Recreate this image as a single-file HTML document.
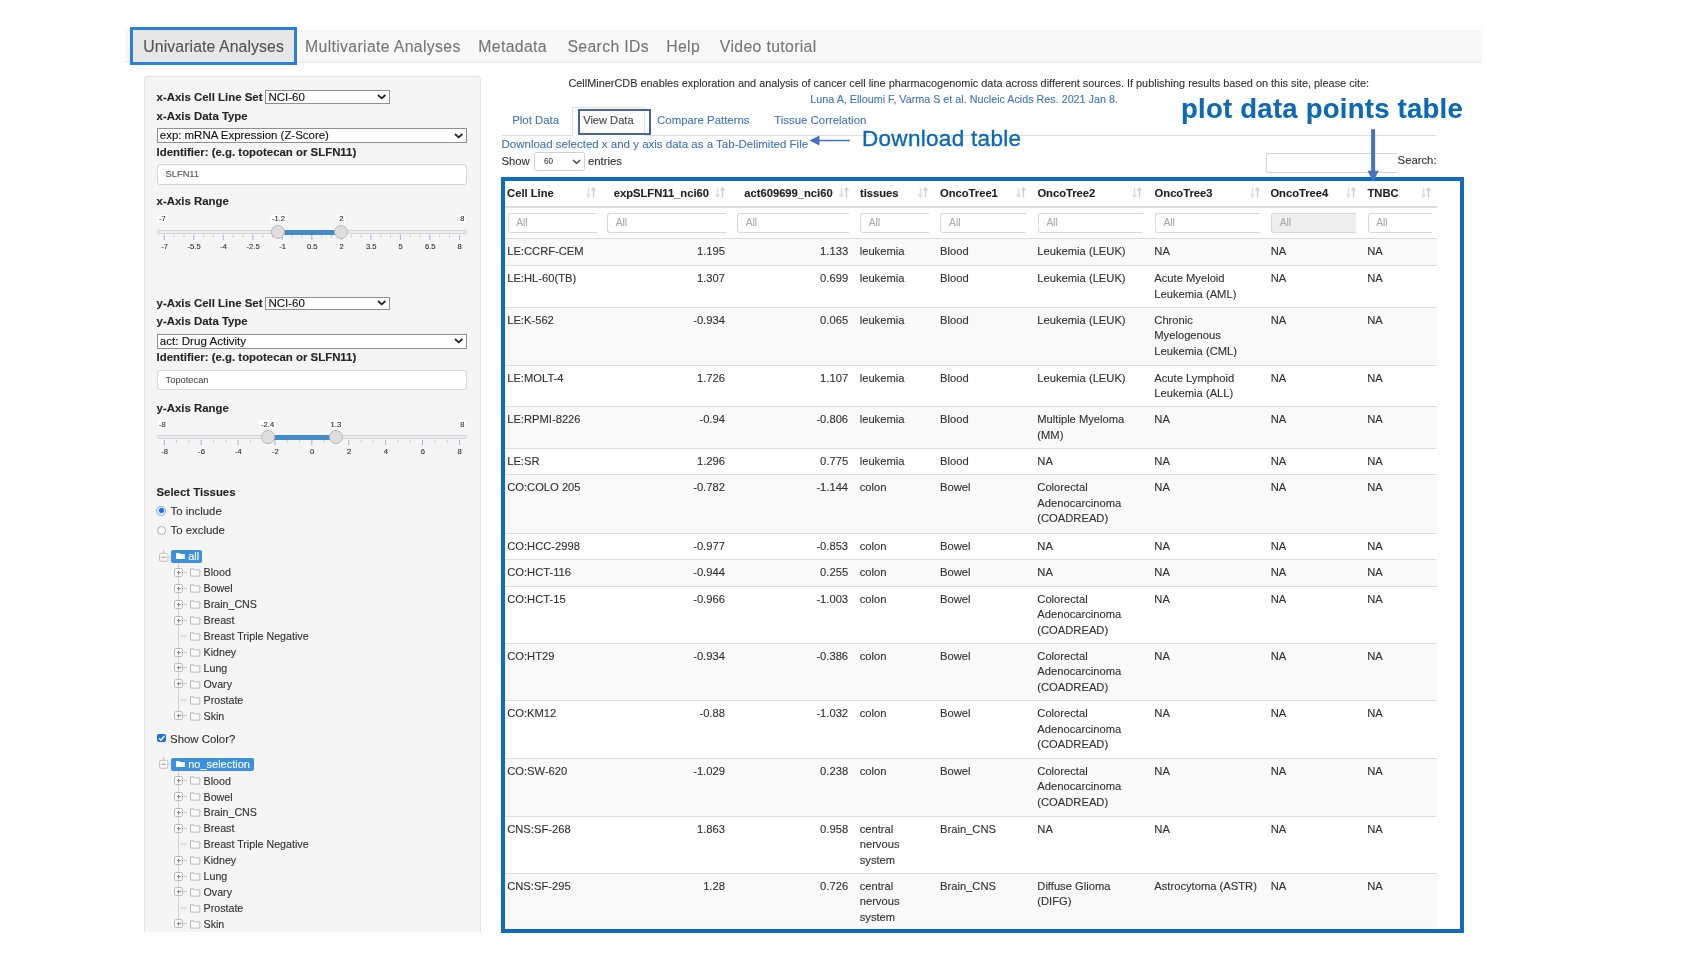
<!DOCTYPE html>
<html><head><meta charset="utf-8"><style>
html,body{margin:0;padding:0;background:#fff;}
body{width:1700px;height:956px;position:relative;overflow:hidden;font-family:"Liberation Sans", sans-serif;}
.t{position:absolute;white-space:nowrap;-webkit-text-stroke:0.12px currentColor;}
.b{position:absolute;}
svg.b{overflow:visible;}
</style></head><body>
<div id="root" style="position:absolute;left:0;top:0;width:1700px;height:956px;will-change:transform;">
<div class="b" style="left:125.00px;top:29.70px;width:1357.00px;height:31.60px;background:#f8f8f8;"></div>
<div class="b" style="left:125.00px;top:61.30px;width:1357.00px;height:2.00px;background:#efefef;"></div>
<div class="b" style="left:129.80px;top:27.40px;width:167.40px;height:37.30px;background:#e7e7e7;border:3px solid #2b7fe3;box-sizing:border-box;"></div>
<div class="t " style="left:143.30px;top:39.17px;font-size:15.8px;line-height:15.8px;color:#555;font-weight:normal;letter-spacing:0.1px;">Univariate Analyses</div>
<div class="t " style="left:305.00px;top:39.17px;font-size:15.8px;line-height:15.8px;color:#777;font-weight:normal;letter-spacing:0.35px;">Multivariate Analyses</div>
<div class="t " style="left:478.30px;top:39.17px;font-size:15.8px;line-height:15.8px;color:#777;font-weight:normal;letter-spacing:0.35px;">Metadata</div>
<div class="t " style="left:567.40px;top:39.17px;font-size:15.8px;line-height:15.8px;color:#777;font-weight:normal;letter-spacing:0.35px;">Search IDs</div>
<div class="t " style="left:666.20px;top:39.17px;font-size:15.8px;line-height:15.8px;color:#777;font-weight:normal;letter-spacing:0.35px;">Help</div>
<div class="t " style="left:719.80px;top:39.17px;font-size:15.8px;line-height:15.8px;color:#777;font-weight:normal;letter-spacing:0.35px;">Video tutorial</div>
<div class="b" style="left:143.50px;top:76.30px;width:337.50px;height:855.70px;background:#f5f5f5;border:1px solid #e3e3e3;border-bottom:none;border-radius:4px 4px 0 0;box-sizing:border-box;"></div>
<div class="t " style="left:156.60px;top:91.59px;font-size:11.42px;line-height:11.42px;color:#262626;font-weight:bold;">x-Axis Cell Line Set</div>
<div class="b" style="left:265.20px;top:90.10px;width:124.60px;height:13.80px;background:#fff;border:1.3px solid #8f8f8f;box-sizing:border-box;"></div>
<div class="t " style="left:268.40px;top:91.62px;font-size:11.5px;line-height:11.5px;color:#111;font-weight:normal;">NCI-60</div>
<svg class="b" style="left:375.70px;top:93.00px;" width="11.4" height="7.4" viewBox="0 0 11.4 7.4"><polyline points="2,2.04 5.7,5.37 9.4,2.04" fill="none" stroke="#222" stroke-width="1.8"/></svg>
<div class="t " style="left:156.60px;top:110.99px;font-size:11.42px;line-height:11.42px;color:#262626;font-weight:bold;">x-Axis Data Type</div>
<div class="b" style="left:156.60px;top:128.20px;width:310.40px;height:14.80px;background:#fff;border:1.3px solid #8f8f8f;box-sizing:border-box;"></div>
<div class="t " style="left:159.80px;top:129.87px;font-size:11.45px;line-height:11.45px;color:#111;font-weight:normal;">exp: mRNA Expression (Z-Score)</div>
<svg class="b" style="left:452.90px;top:131.60px;" width="11.4" height="7.4" viewBox="0 0 11.4 7.4"><polyline points="2,2.04 5.7,5.37 9.4,2.04" fill="none" stroke="#222" stroke-width="1.8"/></svg>
<div class="t " style="left:156.60px;top:146.79px;font-size:11.42px;line-height:11.42px;color:#262626;font-weight:bold;">Identifier: (e.g. topotecan or SLFN11)</div>
<div class="b" style="left:156.60px;top:163.50px;width:310.10px;height:21.00px;background:#fff;border:1px solid #d6d6d6;border-radius:3px;box-sizing:border-box;"></div>
<div class="t " style="left:165.60px;top:169.50px;font-size:9.3px;line-height:9.3px;color:#555;font-weight:normal;">SLFN11</div>
<div class="t " style="left:156.60px;top:196.29px;font-size:11.42px;line-height:11.42px;color:#262626;font-weight:bold;">x-Axis Range</div>
<div class="b" style="left:156.60px;top:229.70px;width:310.10px;height:4.60px;background:#eee;border:1px solid #d4d4d4;border-radius:3px;box-sizing:border-box;"></div>
<div class="b" style="left:278.41px;top:229.60px;width:62.95px;height:5.00px;background:#428bca;"></div>
<svg class="b" style="left:156.00px;top:234.80px;" width="320" height="6" viewBox="0 0 320 6"><line x1="8.30" y1="0" x2="8.30" y2="5" stroke="#a3b3cc" stroke-width="1"/><line x1="18.14" y1="0" x2="18.14" y2="3" stroke="#cfcfcf" stroke-width="1"/><line x1="27.97" y1="0" x2="27.97" y2="3" stroke="#cfcfcf" stroke-width="1"/><line x1="37.81" y1="0" x2="37.81" y2="5" stroke="#a3b3cc" stroke-width="1"/><line x1="47.65" y1="0" x2="47.65" y2="3" stroke="#cfcfcf" stroke-width="1"/><line x1="57.48" y1="0" x2="57.48" y2="3" stroke="#cfcfcf" stroke-width="1"/><line x1="67.32" y1="0" x2="67.32" y2="5" stroke="#a3b3cc" stroke-width="1"/><line x1="77.16" y1="0" x2="77.16" y2="3" stroke="#cfcfcf" stroke-width="1"/><line x1="86.99" y1="0" x2="86.99" y2="3" stroke="#cfcfcf" stroke-width="1"/><line x1="96.83" y1="0" x2="96.83" y2="5" stroke="#a3b3cc" stroke-width="1"/><line x1="106.67" y1="0" x2="106.67" y2="3" stroke="#cfcfcf" stroke-width="1"/><line x1="116.50" y1="0" x2="116.50" y2="3" stroke="#cfcfcf" stroke-width="1"/><line x1="126.34" y1="0" x2="126.34" y2="5" stroke="#a3b3cc" stroke-width="1"/><line x1="136.18" y1="0" x2="136.18" y2="3" stroke="#cfcfcf" stroke-width="1"/><line x1="146.01" y1="0" x2="146.01" y2="3" stroke="#cfcfcf" stroke-width="1"/><line x1="155.85" y1="0" x2="155.85" y2="5" stroke="#a3b3cc" stroke-width="1"/><line x1="165.69" y1="0" x2="165.69" y2="3" stroke="#cfcfcf" stroke-width="1"/><line x1="175.52" y1="0" x2="175.52" y2="3" stroke="#cfcfcf" stroke-width="1"/><line x1="185.36" y1="0" x2="185.36" y2="5" stroke="#a3b3cc" stroke-width="1"/><line x1="195.20" y1="0" x2="195.20" y2="3" stroke="#cfcfcf" stroke-width="1"/><line x1="205.03" y1="0" x2="205.03" y2="3" stroke="#cfcfcf" stroke-width="1"/><line x1="214.87" y1="0" x2="214.87" y2="5" stroke="#a3b3cc" stroke-width="1"/><line x1="224.71" y1="0" x2="224.71" y2="3" stroke="#cfcfcf" stroke-width="1"/><line x1="234.54" y1="0" x2="234.54" y2="3" stroke="#cfcfcf" stroke-width="1"/><line x1="244.38" y1="0" x2="244.38" y2="5" stroke="#a3b3cc" stroke-width="1"/><line x1="254.22" y1="0" x2="254.22" y2="3" stroke="#cfcfcf" stroke-width="1"/><line x1="264.05" y1="0" x2="264.05" y2="3" stroke="#cfcfcf" stroke-width="1"/><line x1="273.89" y1="0" x2="273.89" y2="5" stroke="#a3b3cc" stroke-width="1"/><line x1="283.73" y1="0" x2="283.73" y2="3" stroke="#cfcfcf" stroke-width="1"/><line x1="293.56" y1="0" x2="293.56" y2="3" stroke="#cfcfcf" stroke-width="1"/><line x1="303.40" y1="0" x2="303.40" y2="5" stroke="#a3b3cc" stroke-width="1"/></svg>
<div class="t" style="left:-235.40px;width:800px;text-align:center;top:242.84px;font-size:7.6px;line-height:7.6px;color:#333;font-weight:normal;">-7</div>
<div class="t" style="left:-205.89px;width:800px;text-align:center;top:242.84px;font-size:7.6px;line-height:7.6px;color:#333;font-weight:normal;">-5.5</div>
<div class="t" style="left:-176.38px;width:800px;text-align:center;top:242.84px;font-size:7.6px;line-height:7.6px;color:#333;font-weight:normal;">-4</div>
<div class="t" style="left:-146.87px;width:800px;text-align:center;top:242.84px;font-size:7.6px;line-height:7.6px;color:#333;font-weight:normal;">-2.5</div>
<div class="t" style="left:-117.36px;width:800px;text-align:center;top:242.84px;font-size:7.6px;line-height:7.6px;color:#333;font-weight:normal;">-1</div>
<div class="t" style="left:-87.85px;width:800px;text-align:center;top:242.84px;font-size:7.6px;line-height:7.6px;color:#333;font-weight:normal;">0.5</div>
<div class="t" style="left:-58.34px;width:800px;text-align:center;top:242.84px;font-size:7.6px;line-height:7.6px;color:#333;font-weight:normal;">2</div>
<div class="t" style="left:-28.83px;width:800px;text-align:center;top:242.84px;font-size:7.6px;line-height:7.6px;color:#333;font-weight:normal;">3.5</div>
<div class="t" style="left:0.68px;width:800px;text-align:center;top:242.84px;font-size:7.6px;line-height:7.6px;color:#333;font-weight:normal;">5</div>
<div class="t" style="left:30.19px;width:800px;text-align:center;top:242.84px;font-size:7.6px;line-height:7.6px;color:#333;font-weight:normal;">6.5</div>
<div class="t" style="left:59.70px;width:800px;text-align:center;top:242.84px;font-size:7.6px;line-height:7.6px;color:#333;font-weight:normal;">8</div>
<div class="b" style="left:157.15px;top:214.80px;width:10.30px;height:8.00px;background:#fff;border-radius:2px;"></div>
<div class="t" style="left:-237.70px;width:800px;text-align:center;top:215.34px;font-size:7.6px;line-height:7.6px;color:#333;font-weight:normal;">-7</div>
<div class="b" style="left:458.95px;top:214.80px;width:6.90px;height:8.00px;background:#fff;border-radius:2px;"></div>
<div class="t" style="left:62.40px;width:800px;text-align:center;top:215.34px;font-size:7.6px;line-height:7.6px;color:#333;font-weight:normal;">8</div>
<div class="b" style="left:269.86px;top:214.80px;width:17.10px;height:8.00px;background:#fff;border-radius:2px;"></div>
<div class="t" style="left:-121.59px;width:800px;text-align:center;top:215.34px;font-size:7.6px;line-height:7.6px;color:#333;font-weight:normal;">-1.2</div>
<div class="b" style="left:337.91px;top:214.80px;width:6.90px;height:8.00px;background:#fff;border-radius:2px;"></div>
<div class="t" style="left:-58.64px;width:800px;text-align:center;top:215.34px;font-size:7.6px;line-height:7.6px;color:#333;font-weight:normal;">2</div>
<div class="b" style="left:271.41px;top:225.00px;width:14.00px;height:14.00px;background:#dedede;border:1px solid #b8b8b8;border-radius:50%;box-sizing:border-box;"></div>
<div class="b" style="left:334.36px;top:225.00px;width:14.00px;height:14.00px;background:#dedede;border:1px solid #b8b8b8;border-radius:50%;box-sizing:border-box;"></div>
<div class="t " style="left:156.60px;top:297.99px;font-size:11.42px;line-height:11.42px;color:#262626;font-weight:bold;">y-Axis Cell Line Set</div>
<div class="b" style="left:265.20px;top:296.60px;width:124.60px;height:13.50px;background:#fff;border:1.3px solid #8f8f8f;box-sizing:border-box;"></div>
<div class="t " style="left:268.40px;top:297.83px;font-size:11.5px;line-height:11.5px;color:#111;font-weight:normal;">NCI-60</div>
<svg class="b" style="left:375.70px;top:299.35px;" width="11.4" height="7.4" viewBox="0 0 11.4 7.4"><polyline points="2,2.04 5.7,5.37 9.4,2.04" fill="none" stroke="#222" stroke-width="1.8"/></svg>
<div class="t " style="left:156.60px;top:316.39px;font-size:11.42px;line-height:11.42px;color:#262626;font-weight:bold;">y-Axis Data Type</div>
<div class="b" style="left:156.60px;top:334.00px;width:310.40px;height:14.60px;background:#fff;border:1.3px solid #8f8f8f;box-sizing:border-box;"></div>
<div class="t " style="left:159.80px;top:335.34px;font-size:11.6px;line-height:11.6px;color:#111;font-weight:normal;">act: Drug Activity</div>
<svg class="b" style="left:452.90px;top:337.30px;" width="11.4" height="7.4" viewBox="0 0 11.4 7.4"><polyline points="2,2.04 5.7,5.37 9.4,2.04" fill="none" stroke="#222" stroke-width="1.8"/></svg>
<div class="t " style="left:156.60px;top:351.89px;font-size:11.42px;line-height:11.42px;color:#262626;font-weight:bold;">Identifier: (e.g. topotecan or SLFN11)</div>
<div class="b" style="left:156.60px;top:370.00px;width:310.10px;height:20.40px;background:#fff;border:1px solid #d6d6d6;border-radius:3px;box-sizing:border-box;"></div>
<div class="t " style="left:165.60px;top:375.69px;font-size:9.3px;line-height:9.3px;color:#555;font-weight:normal;">Topotecan</div>
<div class="t " style="left:156.60px;top:402.59px;font-size:11.42px;line-height:11.42px;color:#262626;font-weight:bold;">y-Axis Range</div>
<div class="b" style="left:156.60px;top:434.90px;width:310.10px;height:4.60px;background:#eee;border:1px solid #d4d4d4;border-radius:3px;box-sizing:border-box;"></div>
<div class="b" style="left:267.58px;top:434.80px;width:68.24px;height:5.00px;background:#428bca;"></div>
<svg class="b" style="left:156.00px;top:440.00px;" width="320" height="6" viewBox="0 0 320 6"><line x1="8.30" y1="0" x2="8.30" y2="5" stroke="#a3b3cc" stroke-width="1"/><line x1="20.60" y1="0" x2="20.60" y2="3" stroke="#cfcfcf" stroke-width="1"/><line x1="32.89" y1="0" x2="32.89" y2="3" stroke="#cfcfcf" stroke-width="1"/><line x1="45.19" y1="0" x2="45.19" y2="5" stroke="#a3b3cc" stroke-width="1"/><line x1="57.48" y1="0" x2="57.48" y2="3" stroke="#cfcfcf" stroke-width="1"/><line x1="69.78" y1="0" x2="69.78" y2="3" stroke="#cfcfcf" stroke-width="1"/><line x1="82.07" y1="0" x2="82.07" y2="5" stroke="#a3b3cc" stroke-width="1"/><line x1="94.37" y1="0" x2="94.37" y2="3" stroke="#cfcfcf" stroke-width="1"/><line x1="106.67" y1="0" x2="106.67" y2="3" stroke="#cfcfcf" stroke-width="1"/><line x1="118.96" y1="0" x2="118.96" y2="5" stroke="#a3b3cc" stroke-width="1"/><line x1="131.26" y1="0" x2="131.26" y2="3" stroke="#cfcfcf" stroke-width="1"/><line x1="143.55" y1="0" x2="143.55" y2="3" stroke="#cfcfcf" stroke-width="1"/><line x1="155.85" y1="0" x2="155.85" y2="5" stroke="#a3b3cc" stroke-width="1"/><line x1="168.15" y1="0" x2="168.15" y2="3" stroke="#cfcfcf" stroke-width="1"/><line x1="180.44" y1="0" x2="180.44" y2="3" stroke="#cfcfcf" stroke-width="1"/><line x1="192.74" y1="0" x2="192.74" y2="5" stroke="#a3b3cc" stroke-width="1"/><line x1="205.03" y1="0" x2="205.03" y2="3" stroke="#cfcfcf" stroke-width="1"/><line x1="217.33" y1="0" x2="217.33" y2="3" stroke="#cfcfcf" stroke-width="1"/><line x1="229.62" y1="0" x2="229.62" y2="5" stroke="#a3b3cc" stroke-width="1"/><line x1="241.92" y1="0" x2="241.92" y2="3" stroke="#cfcfcf" stroke-width="1"/><line x1="254.22" y1="0" x2="254.22" y2="3" stroke="#cfcfcf" stroke-width="1"/><line x1="266.51" y1="0" x2="266.51" y2="5" stroke="#a3b3cc" stroke-width="1"/><line x1="278.81" y1="0" x2="278.81" y2="3" stroke="#cfcfcf" stroke-width="1"/><line x1="291.10" y1="0" x2="291.10" y2="3" stroke="#cfcfcf" stroke-width="1"/><line x1="303.40" y1="0" x2="303.40" y2="5" stroke="#a3b3cc" stroke-width="1"/></svg>
<div class="t" style="left:-235.40px;width:800px;text-align:center;top:448.04px;font-size:7.6px;line-height:7.6px;color:#333;font-weight:normal;">-8</div>
<div class="t" style="left:-198.51px;width:800px;text-align:center;top:448.04px;font-size:7.6px;line-height:7.6px;color:#333;font-weight:normal;">-6</div>
<div class="t" style="left:-161.62px;width:800px;text-align:center;top:448.04px;font-size:7.6px;line-height:7.6px;color:#333;font-weight:normal;">-4</div>
<div class="t" style="left:-124.74px;width:800px;text-align:center;top:448.04px;font-size:7.6px;line-height:7.6px;color:#333;font-weight:normal;">-2</div>
<div class="t" style="left:-87.85px;width:800px;text-align:center;top:448.04px;font-size:7.6px;line-height:7.6px;color:#333;font-weight:normal;">0</div>
<div class="t" style="left:-50.96px;width:800px;text-align:center;top:448.04px;font-size:7.6px;line-height:7.6px;color:#333;font-weight:normal;">2</div>
<div class="t" style="left:-14.07px;width:800px;text-align:center;top:448.04px;font-size:7.6px;line-height:7.6px;color:#333;font-weight:normal;">4</div>
<div class="t" style="left:22.81px;width:800px;text-align:center;top:448.04px;font-size:7.6px;line-height:7.6px;color:#333;font-weight:normal;">6</div>
<div class="t" style="left:59.70px;width:800px;text-align:center;top:448.04px;font-size:7.6px;line-height:7.6px;color:#333;font-weight:normal;">8</div>
<div class="b" style="left:157.15px;top:420.00px;width:10.30px;height:8.00px;background:#fff;border-radius:2px;"></div>
<div class="t" style="left:-237.70px;width:800px;text-align:center;top:420.54px;font-size:7.6px;line-height:7.6px;color:#333;font-weight:normal;">-8</div>
<div class="b" style="left:458.95px;top:420.00px;width:6.90px;height:8.00px;background:#fff;border-radius:2px;"></div>
<div class="t" style="left:62.40px;width:800px;text-align:center;top:420.54px;font-size:7.6px;line-height:7.6px;color:#333;font-weight:normal;">8</div>
<div class="b" style="left:259.03px;top:420.00px;width:17.10px;height:8.00px;background:#fff;border-radius:2px;"></div>
<div class="t" style="left:-132.42px;width:800px;text-align:center;top:420.54px;font-size:7.6px;line-height:7.6px;color:#333;font-weight:normal;">-2.4</div>
<div class="b" style="left:328.98px;top:420.00px;width:13.70px;height:8.00px;background:#fff;border-radius:2px;"></div>
<div class="t" style="left:-64.17px;width:800px;text-align:center;top:420.54px;font-size:7.6px;line-height:7.6px;color:#333;font-weight:normal;">1.3</div>
<div class="b" style="left:260.58px;top:430.20px;width:14.00px;height:14.00px;background:#dedede;border:1px solid #b8b8b8;border-radius:50%;box-sizing:border-box;"></div>
<div class="b" style="left:328.83px;top:430.20px;width:14.00px;height:14.00px;background:#dedede;border:1px solid #b8b8b8;border-radius:50%;box-sizing:border-box;"></div>
<div class="t " style="left:156.50px;top:486.79px;font-size:11.42px;line-height:11.42px;color:#262626;font-weight:bold;">Select Tissues</div>
<div class="b" style="left:156.30px;top:506.00px;width:9.60px;height:9.60px;background:#dbe8fb;border:1.3px solid #86aef0;border-radius:50%;box-sizing:border-box;"></div>
<div class="b" style="left:158.60px;top:508.30px;width:5.00px;height:5.00px;background:#1a6ee8;border-radius:50%;"></div>
<div class="t " style="left:170.50px;top:506.11px;font-size:11.4px;line-height:11.4px;color:#333;font-weight:normal;">To include</div>
<div class="b" style="left:156.50px;top:525.60px;width:9.20px;height:9.20px;background:#fff;border:1px solid #aaa;border-radius:50%;box-sizing:border-box;"></div>
<div class="t " style="left:170.50px;top:525.21px;font-size:11.4px;line-height:11.4px;color:#333;font-weight:normal;">To exclude</div>
<svg class="b" style="left:157.00px;top:548.50px;" width="16" height="16" viewBox="0 0 16 16"><line x1="6.6" y1="1" x2="6.6" y2="4.3" stroke="#bbb" stroke-width="0.9"/><rect x="2.6" y="4.3" width="8.3" height="8" rx="1.3" fill="none" stroke="#bbb" stroke-width="0.9"/><line x1="4.6" y1="8.3" x2="8.9" y2="8.3" stroke="#999" stroke-width="0.9"/><line x1="10.9" y1="8.3" x2="14" y2="8.3" stroke="#ccc" stroke-width="0.9"/></svg>
<div class="b" style="left:171.10px;top:550.00px;width:30.60px;height:12.90px;background:#3d8fe0;border-radius:2px;"></div>
<svg class="b" style="left:175.80px;top:552.90px;" width="9" height="6" viewBox="0 0 9 6"><path d="M0,0 h3.2 l0.9,1 h4.7 v5 h-8.8 z" fill="#fff"/></svg>
<div class="t " style="left:188.20px;top:551.15px;font-size:11.0px;line-height:11.0px;color:#fff;font-weight:normal;">all</div>
<div class="b" style="left:178.10px;top:563.00px;width:0.80px;height:151.77px;background:#d2d2d2;"></div>
<svg class="b" style="left:174.00px;top:568.00px;" width="14" height="9" viewBox="0 0 14 9"><rect x="0.5" y="0.5" width="8" height="8" rx="1.2" fill="#f5f5f5" stroke="#bdbdbd" stroke-width="1"/><path d="M2.5,4.5 H6.5 M4.5,2.5 V6.5" stroke="#8a8a8a" stroke-width="1" shape-rendering="crispEdges"/><path d="M9,4.5 H12.5" stroke="#cccccc" stroke-width="1" shape-rendering="crispEdges"/></svg>
<div class="b" style="left:178.10px;top:576.40px;width:0.80px;height:0.01px;"></div>
<svg class="b" style="left:190.00px;top:568.20px;" width="11" height="9" viewBox="0 0 11 9"><path d="M0.5,0.8 h3.4 l1.1,1.1 h4.8 v6.2 h-9.3 z" fill="#fafafa" stroke="#b0b0b0" stroke-width="0.85"/></svg>
<div class="t " style="left:203.50px;top:567.40px;font-size:10.7px;line-height:10.7px;color:#333;font-weight:normal;">Blood</div>
<svg class="b" style="left:174.00px;top:584.00px;" width="14" height="9" viewBox="0 0 14 9"><rect x="0.5" y="0.5" width="8" height="8" rx="1.2" fill="#f5f5f5" stroke="#bdbdbd" stroke-width="1"/><path d="M2.5,4.5 H6.5 M4.5,2.5 V6.5" stroke="#8a8a8a" stroke-width="1" shape-rendering="crispEdges"/><path d="M9,4.5 H12.5" stroke="#cccccc" stroke-width="1" shape-rendering="crispEdges"/></svg>
<div class="b" style="left:178.10px;top:592.33px;width:0.80px;height:0.01px;"></div>
<svg class="b" style="left:190.00px;top:584.13px;" width="11" height="9" viewBox="0 0 11 9"><path d="M0.5,0.8 h3.4 l1.1,1.1 h4.8 v6.2 h-9.3 z" fill="#fafafa" stroke="#b0b0b0" stroke-width="0.85"/></svg>
<div class="t " style="left:203.50px;top:583.33px;font-size:10.7px;line-height:10.7px;color:#333;font-weight:normal;">Bowel</div>
<svg class="b" style="left:174.00px;top:600.00px;" width="14" height="9" viewBox="0 0 14 9"><rect x="0.5" y="0.5" width="8" height="8" rx="1.2" fill="#f5f5f5" stroke="#bdbdbd" stroke-width="1"/><path d="M2.5,4.5 H6.5 M4.5,2.5 V6.5" stroke="#8a8a8a" stroke-width="1" shape-rendering="crispEdges"/><path d="M9,4.5 H12.5" stroke="#cccccc" stroke-width="1" shape-rendering="crispEdges"/></svg>
<div class="b" style="left:178.10px;top:608.26px;width:0.80px;height:0.01px;"></div>
<svg class="b" style="left:190.00px;top:600.06px;" width="11" height="9" viewBox="0 0 11 9"><path d="M0.5,0.8 h3.4 l1.1,1.1 h4.8 v6.2 h-9.3 z" fill="#fafafa" stroke="#b0b0b0" stroke-width="0.85"/></svg>
<div class="t " style="left:203.50px;top:599.26px;font-size:10.7px;line-height:10.7px;color:#333;font-weight:normal;">Brain_CNS</div>
<svg class="b" style="left:174.00px;top:616.00px;" width="14" height="9" viewBox="0 0 14 9"><rect x="0.5" y="0.5" width="8" height="8" rx="1.2" fill="#f5f5f5" stroke="#bdbdbd" stroke-width="1"/><path d="M2.5,4.5 H6.5 M4.5,2.5 V6.5" stroke="#8a8a8a" stroke-width="1" shape-rendering="crispEdges"/><path d="M9,4.5 H12.5" stroke="#cccccc" stroke-width="1" shape-rendering="crispEdges"/></svg>
<div class="b" style="left:178.10px;top:624.19px;width:0.80px;height:0.01px;"></div>
<svg class="b" style="left:190.00px;top:615.99px;" width="11" height="9" viewBox="0 0 11 9"><path d="M0.5,0.8 h3.4 l1.1,1.1 h4.8 v6.2 h-9.3 z" fill="#fafafa" stroke="#b0b0b0" stroke-width="0.85"/></svg>
<div class="t " style="left:203.50px;top:615.19px;font-size:10.7px;line-height:10.7px;color:#333;font-weight:normal;">Breast</div>
<svg class="b" style="left:173.50px;top:631.12px;" width="16" height="10" viewBox="0 0 16 10"><line x1="5.4" y1="5" x2="12.5" y2="5" stroke="#c8c8c8" stroke-width="0.9"/></svg>
<svg class="b" style="left:190.00px;top:631.92px;" width="11" height="9" viewBox="0 0 11 9"><path d="M0.5,0.8 h3.4 l1.1,1.1 h4.8 v6.2 h-9.3 z" fill="#fafafa" stroke="#b0b0b0" stroke-width="0.85"/></svg>
<div class="t " style="left:203.50px;top:631.12px;font-size:10.7px;line-height:10.7px;color:#333;font-weight:normal;">Breast Triple Negative</div>
<svg class="b" style="left:174.00px;top:648.00px;" width="14" height="9" viewBox="0 0 14 9"><rect x="0.5" y="0.5" width="8" height="8" rx="1.2" fill="#f5f5f5" stroke="#bdbdbd" stroke-width="1"/><path d="M2.5,4.5 H6.5 M4.5,2.5 V6.5" stroke="#8a8a8a" stroke-width="1" shape-rendering="crispEdges"/><path d="M9,4.5 H12.5" stroke="#cccccc" stroke-width="1" shape-rendering="crispEdges"/></svg>
<div class="b" style="left:178.10px;top:656.05px;width:0.80px;height:0.01px;"></div>
<svg class="b" style="left:190.00px;top:647.85px;" width="11" height="9" viewBox="0 0 11 9"><path d="M0.5,0.8 h3.4 l1.1,1.1 h4.8 v6.2 h-9.3 z" fill="#fafafa" stroke="#b0b0b0" stroke-width="0.85"/></svg>
<div class="t " style="left:203.50px;top:647.05px;font-size:10.7px;line-height:10.7px;color:#333;font-weight:normal;">Kidney</div>
<svg class="b" style="left:174.00px;top:663.00px;" width="14" height="9" viewBox="0 0 14 9"><rect x="0.5" y="0.5" width="8" height="8" rx="1.2" fill="#f5f5f5" stroke="#bdbdbd" stroke-width="1"/><path d="M2.5,4.5 H6.5 M4.5,2.5 V6.5" stroke="#8a8a8a" stroke-width="1" shape-rendering="crispEdges"/><path d="M9,4.5 H12.5" stroke="#cccccc" stroke-width="1" shape-rendering="crispEdges"/></svg>
<div class="b" style="left:178.10px;top:671.98px;width:0.80px;height:0.01px;"></div>
<svg class="b" style="left:190.00px;top:663.78px;" width="11" height="9" viewBox="0 0 11 9"><path d="M0.5,0.8 h3.4 l1.1,1.1 h4.8 v6.2 h-9.3 z" fill="#fafafa" stroke="#b0b0b0" stroke-width="0.85"/></svg>
<div class="t " style="left:203.50px;top:662.99px;font-size:10.7px;line-height:10.7px;color:#333;font-weight:normal;">Lung</div>
<svg class="b" style="left:174.00px;top:679.00px;" width="14" height="9" viewBox="0 0 14 9"><rect x="0.5" y="0.5" width="8" height="8" rx="1.2" fill="#f5f5f5" stroke="#bdbdbd" stroke-width="1"/><path d="M2.5,4.5 H6.5 M4.5,2.5 V6.5" stroke="#8a8a8a" stroke-width="1" shape-rendering="crispEdges"/><path d="M9,4.5 H12.5" stroke="#cccccc" stroke-width="1" shape-rendering="crispEdges"/></svg>
<div class="b" style="left:178.10px;top:687.91px;width:0.80px;height:0.01px;"></div>
<svg class="b" style="left:190.00px;top:679.71px;" width="11" height="9" viewBox="0 0 11 9"><path d="M0.5,0.8 h3.4 l1.1,1.1 h4.8 v6.2 h-9.3 z" fill="#fafafa" stroke="#b0b0b0" stroke-width="0.85"/></svg>
<div class="t " style="left:203.50px;top:678.91px;font-size:10.7px;line-height:10.7px;color:#333;font-weight:normal;">Ovary</div>
<svg class="b" style="left:173.50px;top:694.84px;" width="16" height="10" viewBox="0 0 16 10"><line x1="5.4" y1="5" x2="12.5" y2="5" stroke="#c8c8c8" stroke-width="0.9"/></svg>
<svg class="b" style="left:190.00px;top:695.64px;" width="11" height="9" viewBox="0 0 11 9"><path d="M0.5,0.8 h3.4 l1.1,1.1 h4.8 v6.2 h-9.3 z" fill="#fafafa" stroke="#b0b0b0" stroke-width="0.85"/></svg>
<div class="t " style="left:203.50px;top:694.84px;font-size:10.7px;line-height:10.7px;color:#333;font-weight:normal;">Prostate</div>
<svg class="b" style="left:174.00px;top:711.00px;" width="14" height="9" viewBox="0 0 14 9"><rect x="0.5" y="0.5" width="8" height="8" rx="1.2" fill="#f5f5f5" stroke="#bdbdbd" stroke-width="1"/><path d="M2.5,4.5 H6.5 M4.5,2.5 V6.5" stroke="#8a8a8a" stroke-width="1" shape-rendering="crispEdges"/><path d="M9,4.5 H12.5" stroke="#cccccc" stroke-width="1" shape-rendering="crispEdges"/></svg>
<svg class="b" style="left:190.00px;top:711.57px;" width="11" height="9" viewBox="0 0 11 9"><path d="M0.5,0.8 h3.4 l1.1,1.1 h4.8 v6.2 h-9.3 z" fill="#fafafa" stroke="#b0b0b0" stroke-width="0.85"/></svg>
<div class="t " style="left:203.50px;top:710.77px;font-size:10.7px;line-height:10.7px;color:#333;font-weight:normal;">Skin</div>
<div class="b" style="left:156.50px;top:733.60px;width:9.30px;height:8.60px;background:#1a6ee8;border-radius:2px;"></div>
<svg class="b" style="left:156.50px;top:733.70px;" width="9.2" height="8.3" viewBox="0 0 9.2 8.3"><polyline points="2,4.3 3.9,6.2 7.4,2" fill="none" stroke="#fff" stroke-width="1.5"/></svg>
<div class="t " style="left:170.10px;top:733.91px;font-size:11.4px;line-height:11.4px;color:#333;font-weight:normal;">Show Color?</div>
<svg class="b" style="left:157.00px;top:756.20px;" width="16" height="16" viewBox="0 0 16 16"><line x1="6.6" y1="1" x2="6.6" y2="4.3" stroke="#bbb" stroke-width="0.9"/><rect x="2.6" y="4.3" width="8.3" height="8" rx="1.3" fill="none" stroke="#bbb" stroke-width="0.9"/><line x1="4.6" y1="8.3" x2="8.9" y2="8.3" stroke="#999" stroke-width="0.9"/><line x1="10.9" y1="8.3" x2="14" y2="8.3" stroke="#ccc" stroke-width="0.9"/></svg>
<div class="b" style="left:171.10px;top:757.70px;width:82.90px;height:12.90px;background:#3d8fe0;border-radius:2px;"></div>
<svg class="b" style="left:175.80px;top:760.60px;" width="9" height="6" viewBox="0 0 9 6"><path d="M0,0 h3.2 l0.9,1 h4.7 v5 h-8.8 z" fill="#fff"/></svg>
<div class="t " style="left:188.20px;top:758.85px;font-size:11.0px;line-height:11.0px;color:#fff;font-weight:normal;">no_selection</div>
<div class="b" style="left:178.10px;top:770.70px;width:0.80px;height:152.00px;background:#d2d2d2;"></div>
<svg class="b" style="left:174.00px;top:776.00px;" width="14" height="9" viewBox="0 0 14 9"><rect x="0.5" y="0.5" width="8" height="8" rx="1.2" fill="#f5f5f5" stroke="#bdbdbd" stroke-width="1"/><path d="M2.5,4.5 H6.5 M4.5,2.5 V6.5" stroke="#8a8a8a" stroke-width="1" shape-rendering="crispEdges"/><path d="M9,4.5 H12.5" stroke="#cccccc" stroke-width="1" shape-rendering="crispEdges"/></svg>
<div class="b" style="left:178.10px;top:784.60px;width:0.80px;height:0.01px;"></div>
<svg class="b" style="left:190.00px;top:776.40px;" width="11" height="9" viewBox="0 0 11 9"><path d="M0.5,0.8 h3.4 l1.1,1.1 h4.8 v6.2 h-9.3 z" fill="#fafafa" stroke="#b0b0b0" stroke-width="0.85"/></svg>
<div class="t " style="left:203.50px;top:775.61px;font-size:10.7px;line-height:10.7px;color:#333;font-weight:normal;">Blood</div>
<svg class="b" style="left:174.00px;top:792.00px;" width="14" height="9" viewBox="0 0 14 9"><rect x="0.5" y="0.5" width="8" height="8" rx="1.2" fill="#f5f5f5" stroke="#bdbdbd" stroke-width="1"/><path d="M2.5,4.5 H6.5 M4.5,2.5 V6.5" stroke="#8a8a8a" stroke-width="1" shape-rendering="crispEdges"/><path d="M9,4.5 H12.5" stroke="#cccccc" stroke-width="1" shape-rendering="crispEdges"/></svg>
<div class="b" style="left:178.10px;top:800.50px;width:0.80px;height:0.01px;"></div>
<svg class="b" style="left:190.00px;top:792.30px;" width="11" height="9" viewBox="0 0 11 9"><path d="M0.5,0.8 h3.4 l1.1,1.1 h4.8 v6.2 h-9.3 z" fill="#fafafa" stroke="#b0b0b0" stroke-width="0.85"/></svg>
<div class="t " style="left:203.50px;top:791.50px;font-size:10.7px;line-height:10.7px;color:#333;font-weight:normal;">Bowel</div>
<svg class="b" style="left:174.00px;top:808.00px;" width="14" height="9" viewBox="0 0 14 9"><rect x="0.5" y="0.5" width="8" height="8" rx="1.2" fill="#f5f5f5" stroke="#bdbdbd" stroke-width="1"/><path d="M2.5,4.5 H6.5 M4.5,2.5 V6.5" stroke="#8a8a8a" stroke-width="1" shape-rendering="crispEdges"/><path d="M9,4.5 H12.5" stroke="#cccccc" stroke-width="1" shape-rendering="crispEdges"/></svg>
<div class="b" style="left:178.10px;top:816.40px;width:0.80px;height:0.01px;"></div>
<svg class="b" style="left:190.00px;top:808.20px;" width="11" height="9" viewBox="0 0 11 9"><path d="M0.5,0.8 h3.4 l1.1,1.1 h4.8 v6.2 h-9.3 z" fill="#fafafa" stroke="#b0b0b0" stroke-width="0.85"/></svg>
<div class="t " style="left:203.50px;top:807.40px;font-size:10.7px;line-height:10.7px;color:#333;font-weight:normal;">Brain_CNS</div>
<svg class="b" style="left:174.00px;top:824.00px;" width="14" height="9" viewBox="0 0 14 9"><rect x="0.5" y="0.5" width="8" height="8" rx="1.2" fill="#f5f5f5" stroke="#bdbdbd" stroke-width="1"/><path d="M2.5,4.5 H6.5 M4.5,2.5 V6.5" stroke="#8a8a8a" stroke-width="1" shape-rendering="crispEdges"/><path d="M9,4.5 H12.5" stroke="#cccccc" stroke-width="1" shape-rendering="crispEdges"/></svg>
<div class="b" style="left:178.10px;top:832.30px;width:0.80px;height:0.01px;"></div>
<svg class="b" style="left:190.00px;top:824.10px;" width="11" height="9" viewBox="0 0 11 9"><path d="M0.5,0.8 h3.4 l1.1,1.1 h4.8 v6.2 h-9.3 z" fill="#fafafa" stroke="#b0b0b0" stroke-width="0.85"/></svg>
<div class="t " style="left:203.50px;top:823.31px;font-size:10.7px;line-height:10.7px;color:#333;font-weight:normal;">Breast</div>
<svg class="b" style="left:173.50px;top:839.20px;" width="16" height="10" viewBox="0 0 16 10"><line x1="5.4" y1="5" x2="12.5" y2="5" stroke="#c8c8c8" stroke-width="0.9"/></svg>
<svg class="b" style="left:190.00px;top:840.00px;" width="11" height="9" viewBox="0 0 11 9"><path d="M0.5,0.8 h3.4 l1.1,1.1 h4.8 v6.2 h-9.3 z" fill="#fafafa" stroke="#b0b0b0" stroke-width="0.85"/></svg>
<div class="t " style="left:203.50px;top:839.21px;font-size:10.7px;line-height:10.7px;color:#333;font-weight:normal;">Breast Triple Negative</div>
<svg class="b" style="left:174.00px;top:856.00px;" width="14" height="9" viewBox="0 0 14 9"><rect x="0.5" y="0.5" width="8" height="8" rx="1.2" fill="#f5f5f5" stroke="#bdbdbd" stroke-width="1"/><path d="M2.5,4.5 H6.5 M4.5,2.5 V6.5" stroke="#8a8a8a" stroke-width="1" shape-rendering="crispEdges"/><path d="M9,4.5 H12.5" stroke="#cccccc" stroke-width="1" shape-rendering="crispEdges"/></svg>
<div class="b" style="left:178.10px;top:864.10px;width:0.80px;height:0.01px;"></div>
<svg class="b" style="left:190.00px;top:855.90px;" width="11" height="9" viewBox="0 0 11 9"><path d="M0.5,0.8 h3.4 l1.1,1.1 h4.8 v6.2 h-9.3 z" fill="#fafafa" stroke="#b0b0b0" stroke-width="0.85"/></svg>
<div class="t " style="left:203.50px;top:855.11px;font-size:10.7px;line-height:10.7px;color:#333;font-weight:normal;">Kidney</div>
<svg class="b" style="left:174.00px;top:872.00px;" width="14" height="9" viewBox="0 0 14 9"><rect x="0.5" y="0.5" width="8" height="8" rx="1.2" fill="#f5f5f5" stroke="#bdbdbd" stroke-width="1"/><path d="M2.5,4.5 H6.5 M4.5,2.5 V6.5" stroke="#8a8a8a" stroke-width="1" shape-rendering="crispEdges"/><path d="M9,4.5 H12.5" stroke="#cccccc" stroke-width="1" shape-rendering="crispEdges"/></svg>
<div class="b" style="left:178.10px;top:880.00px;width:0.80px;height:0.01px;"></div>
<svg class="b" style="left:190.00px;top:871.80px;" width="11" height="9" viewBox="0 0 11 9"><path d="M0.5,0.8 h3.4 l1.1,1.1 h4.8 v6.2 h-9.3 z" fill="#fafafa" stroke="#b0b0b0" stroke-width="0.85"/></svg>
<div class="t " style="left:203.50px;top:871.00px;font-size:10.7px;line-height:10.7px;color:#333;font-weight:normal;">Lung</div>
<svg class="b" style="left:174.00px;top:887.00px;" width="14" height="9" viewBox="0 0 14 9"><rect x="0.5" y="0.5" width="8" height="8" rx="1.2" fill="#f5f5f5" stroke="#bdbdbd" stroke-width="1"/><path d="M2.5,4.5 H6.5 M4.5,2.5 V6.5" stroke="#8a8a8a" stroke-width="1" shape-rendering="crispEdges"/><path d="M9,4.5 H12.5" stroke="#cccccc" stroke-width="1" shape-rendering="crispEdges"/></svg>
<div class="b" style="left:178.10px;top:895.90px;width:0.80px;height:0.01px;"></div>
<svg class="b" style="left:190.00px;top:887.70px;" width="11" height="9" viewBox="0 0 11 9"><path d="M0.5,0.8 h3.4 l1.1,1.1 h4.8 v6.2 h-9.3 z" fill="#fafafa" stroke="#b0b0b0" stroke-width="0.85"/></svg>
<div class="t " style="left:203.50px;top:886.90px;font-size:10.7px;line-height:10.7px;color:#333;font-weight:normal;">Ovary</div>
<svg class="b" style="left:173.50px;top:902.80px;" width="16" height="10" viewBox="0 0 16 10"><line x1="5.4" y1="5" x2="12.5" y2="5" stroke="#c8c8c8" stroke-width="0.9"/></svg>
<svg class="b" style="left:190.00px;top:903.60px;" width="11" height="9" viewBox="0 0 11 9"><path d="M0.5,0.8 h3.4 l1.1,1.1 h4.8 v6.2 h-9.3 z" fill="#fafafa" stroke="#b0b0b0" stroke-width="0.85"/></svg>
<div class="t " style="left:203.50px;top:902.81px;font-size:10.7px;line-height:10.7px;color:#333;font-weight:normal;">Prostate</div>
<svg class="b" style="left:174.00px;top:919.00px;" width="14" height="9" viewBox="0 0 14 9"><rect x="0.5" y="0.5" width="8" height="8" rx="1.2" fill="#f5f5f5" stroke="#bdbdbd" stroke-width="1"/><path d="M2.5,4.5 H6.5 M4.5,2.5 V6.5" stroke="#8a8a8a" stroke-width="1" shape-rendering="crispEdges"/><path d="M9,4.5 H12.5" stroke="#cccccc" stroke-width="1" shape-rendering="crispEdges"/></svg>
<svg class="b" style="left:190.00px;top:919.50px;" width="11" height="9" viewBox="0 0 11 9"><path d="M0.5,0.8 h3.4 l1.1,1.1 h4.8 v6.2 h-9.3 z" fill="#fafafa" stroke="#b0b0b0" stroke-width="0.85"/></svg>
<div class="t " style="left:203.50px;top:918.71px;font-size:10.7px;line-height:10.7px;color:#333;font-weight:normal;">Skin</div>
<div class="t" style="left:568.80px;width:800px;text-align:center;top:78.14px;font-size:10.9px;line-height:10.9px;color:#333;font-weight:normal;width:1000px;left:468.8px;">CellMinerCDB enables exploration and analysis of cancer cell line pharmacogenomic data across different sources. If publishing results based on this site, please cite:</div>
<div class="t" style="left:564.10px;width:800px;text-align:center;top:93.86px;font-size:10.75px;line-height:10.75px;color:#4277b6;font-weight:normal;">Luna A, Elloumi F, Varma S et al. Nucleic Acids Res. 2021 Jan 8.</div>
<div class="b" style="left:501.50px;top:134.60px;width:935.50px;height:1.00px;background:#ddd;"></div>
<div class="b" style="left:572.40px;top:106.60px;width:73.10px;height:29.00px;background:#fff;border:1px solid #e2e2e2;border-bottom-color:#fff;border-radius:1px 1px 0 0;box-sizing:border-box;"></div>
<div class="b" style="left:578.30px;top:108.60px;width:72.50px;height:26.30px;border:2px solid #4363ab;box-sizing:border-box;"></div>
<div class="t " style="left:512.20px;top:115.21px;font-size:11.4px;line-height:11.4px;color:#4277b6;font-weight:normal;">Plot Data</div>
<div class="t " style="left:583.20px;top:115.47px;font-size:11.1px;line-height:11.1px;color:#4a4a4a;font-weight:normal;-webkit-text-stroke:0.15px #4a4a4a;">View Data</div>
<div class="t " style="left:657.10px;top:115.21px;font-size:11.4px;line-height:11.4px;color:#4277b6;font-weight:normal;">Compare Patterns</div>
<div class="t " style="left:774.30px;top:115.21px;font-size:11.4px;line-height:11.4px;color:#4277b6;font-weight:normal;">Tissue Correlation</div>
<div class="t " style="left:501.50px;top:138.62px;font-size:11.5px;line-height:11.5px;color:#4277b6;font-weight:normal;">Download selected x and y axis data as a Tab-Delimited File</div>
<div class="t " style="left:501.50px;top:155.90px;font-size:11.3px;line-height:11.3px;color:#333;font-weight:normal;">Show</div>
<div class="b" style="left:533.60px;top:152.30px;width:51.00px;height:19.20px;background:#fff;border:1px solid #d0d0d0;border-radius:2.5px;box-sizing:border-box;"></div>
<div class="t " style="left:544.00px;top:158.43px;font-size:8.2px;line-height:8.2px;color:#444;font-weight:normal;">60</div>
<svg class="b" style="left:570.70px;top:158.40px;" width="11.2" height="7.2" viewBox="0 0 11.2 7.2"><polyline points="2,1.98 5.6,5.22 9.2,1.98" fill="none" stroke="#444" stroke-width="1.5"/></svg>
<div class="t " style="left:588.00px;top:155.90px;font-size:11.3px;line-height:11.3px;color:#333;font-weight:normal;">entries</div>
<div class="b" style="left:1266.40px;top:152.60px;width:130.60px;height:20.00px;background:#fff;border:1px solid #d4d4d4;border-right:none;border-radius:3px 0 0 3px;box-sizing:border-box;"></div>
<div class="t " style="left:1397.60px;top:155.00px;font-size:11.3px;line-height:11.3px;color:#333;font-weight:normal;">Search:</div>
<div class="b" style="left:505.00px;top:206.00px;width:932.00px;height:2.00px;background:#ddd;"></div>
<div class="b" style="left:505.00px;top:238.00px;width:932.00px;height:1.00px;background:#ddd;"></div>
<div class="t " style="left:507.10px;top:187.78px;font-size:11.2px;line-height:11.2px;color:#222;font-weight:bold;">Cell Line</div>
<svg class="b" style="left:586.00px;top:187.20px;" width="10" height="11" viewBox="0 0 10 11"><g fill="none" stroke-width="1.4"><g stroke="#dcdcdc"><line x1="2.5" y1="1" x2="2.5" y2="9.5"/><polyline points="0.5,7.4 2.5,9.8 4.5,7.4"/></g><g stroke="#cfcfcf"><line x1="7.5" y1="1.2" x2="7.5" y2="10.5"/><polyline points="5.5,3.4 7.5,1 9.5,3.4"/></g></g></svg>
<div class="b" style="left:507.50px;top:213.30px;width:89.00px;height:20.00px;background:#fff;border:1px solid #d9d9d9;border-right:none;border-radius:3px 0 0 3px;box-sizing:border-box;"></div>
<div class="t " style="left:516.30px;top:218.33px;font-size:10.2px;line-height:10.2px;color:#aaa;font-weight:normal;">All</div>
<div class="t " style="left:613.80px;top:187.78px;font-size:11.2px;line-height:11.2px;color:#222;font-weight:bold;">expSLFN11_nci60</div>
<svg class="b" style="left:715.40px;top:187.20px;" width="10" height="11" viewBox="0 0 10 11"><g fill="none" stroke-width="1.4"><g stroke="#dcdcdc"><line x1="2.5" y1="1" x2="2.5" y2="9.5"/><polyline points="0.5,7.4 2.5,9.8 4.5,7.4"/></g><g stroke="#cfcfcf"><line x1="7.5" y1="1.2" x2="7.5" y2="10.5"/><polyline points="5.5,3.4 7.5,1 9.5,3.4"/></g></g></svg>
<div class="b" style="left:607.00px;top:213.30px;width:118.90px;height:20.00px;background:#fff;border:1px solid #d9d9d9;border-right:none;border-radius:3px 0 0 3px;box-sizing:border-box;"></div>
<div class="t " style="left:615.80px;top:218.33px;font-size:10.2px;line-height:10.2px;color:#aaa;font-weight:normal;">All</div>
<div class="t " style="left:744.30px;top:187.78px;font-size:11.2px;line-height:11.2px;color:#222;font-weight:bold;">act609699_nci60</div>
<svg class="b" style="left:838.60px;top:187.20px;" width="10" height="11" viewBox="0 0 10 11"><g fill="none" stroke-width="1.4"><g stroke="#dcdcdc"><line x1="2.5" y1="1" x2="2.5" y2="9.5"/><polyline points="0.5,7.4 2.5,9.8 4.5,7.4"/></g><g stroke="#cfcfcf"><line x1="7.5" y1="1.2" x2="7.5" y2="10.5"/><polyline points="5.5,3.4 7.5,1 9.5,3.4"/></g></g></svg>
<div class="b" style="left:736.90px;top:213.30px;width:112.20px;height:20.00px;background:#fff;border:1px solid #d9d9d9;border-right:none;border-radius:3px 0 0 3px;box-sizing:border-box;"></div>
<div class="t " style="left:745.70px;top:218.33px;font-size:10.2px;line-height:10.2px;color:#aaa;font-weight:normal;">All</div>
<div class="t " style="left:860.00px;top:187.78px;font-size:11.2px;line-height:11.2px;color:#222;font-weight:bold;">tissues</div>
<svg class="b" style="left:918.30px;top:187.20px;" width="10" height="11" viewBox="0 0 10 11"><g fill="none" stroke-width="1.4"><g stroke="#dcdcdc"><line x1="2.5" y1="1" x2="2.5" y2="9.5"/><polyline points="0.5,7.4 2.5,9.8 4.5,7.4"/></g><g stroke="#cfcfcf"><line x1="7.5" y1="1.2" x2="7.5" y2="10.5"/><polyline points="5.5,3.4 7.5,1 9.5,3.4"/></g></g></svg>
<div class="b" style="left:860.00px;top:213.30px;width:68.80px;height:20.00px;background:#fff;border:1px solid #d9d9d9;border-right:none;border-radius:3px 0 0 3px;box-sizing:border-box;"></div>
<div class="t " style="left:868.80px;top:218.33px;font-size:10.2px;line-height:10.2px;color:#aaa;font-weight:normal;">All</div>
<div class="t " style="left:940.00px;top:187.78px;font-size:11.2px;line-height:11.2px;color:#222;font-weight:bold;">OncoTree1</div>
<svg class="b" style="left:1015.80px;top:187.20px;" width="10" height="11" viewBox="0 0 10 11"><g fill="none" stroke-width="1.4"><g stroke="#dcdcdc"><line x1="2.5" y1="1" x2="2.5" y2="9.5"/><polyline points="0.5,7.4 2.5,9.8 4.5,7.4"/></g><g stroke="#cfcfcf"><line x1="7.5" y1="1.2" x2="7.5" y2="10.5"/><polyline points="5.5,3.4 7.5,1 9.5,3.4"/></g></g></svg>
<div class="b" style="left:940.30px;top:213.30px;width:86.00px;height:20.00px;background:#fff;border:1px solid #d9d9d9;border-right:none;border-radius:3px 0 0 3px;box-sizing:border-box;"></div>
<div class="t " style="left:949.10px;top:218.33px;font-size:10.2px;line-height:10.2px;color:#aaa;font-weight:normal;">All</div>
<div class="t " style="left:1037.40px;top:187.78px;font-size:11.2px;line-height:11.2px;color:#222;font-weight:bold;">OncoTree2</div>
<svg class="b" style="left:1132.40px;top:187.20px;" width="10" height="11" viewBox="0 0 10 11"><g fill="none" stroke-width="1.4"><g stroke="#dcdcdc"><line x1="2.5" y1="1" x2="2.5" y2="9.5"/><polyline points="0.5,7.4 2.5,9.8 4.5,7.4"/></g><g stroke="#cfcfcf"><line x1="7.5" y1="1.2" x2="7.5" y2="10.5"/><polyline points="5.5,3.4 7.5,1 9.5,3.4"/></g></g></svg>
<div class="b" style="left:1037.60px;top:213.30px;width:105.30px;height:20.00px;background:#fff;border:1px solid #d9d9d9;border-right:none;border-radius:3px 0 0 3px;box-sizing:border-box;"></div>
<div class="t " style="left:1046.40px;top:218.33px;font-size:10.2px;line-height:10.2px;color:#aaa;font-weight:normal;">All</div>
<div class="t " style="left:1154.60px;top:187.78px;font-size:11.2px;line-height:11.2px;color:#222;font-weight:bold;">OncoTree3</div>
<svg class="b" style="left:1249.50px;top:187.20px;" width="10" height="11" viewBox="0 0 10 11"><g fill="none" stroke-width="1.4"><g stroke="#dcdcdc"><line x1="2.5" y1="1" x2="2.5" y2="9.5"/><polyline points="0.5,7.4 2.5,9.8 4.5,7.4"/></g><g stroke="#cfcfcf"><line x1="7.5" y1="1.2" x2="7.5" y2="10.5"/><polyline points="5.5,3.4 7.5,1 9.5,3.4"/></g></g></svg>
<div class="b" style="left:1154.60px;top:213.30px;width:105.40px;height:20.00px;background:#fff;border:1px solid #d9d9d9;border-right:none;border-radius:3px 0 0 3px;box-sizing:border-box;"></div>
<div class="t " style="left:1163.40px;top:218.33px;font-size:10.2px;line-height:10.2px;color:#aaa;font-weight:normal;">All</div>
<div class="t " style="left:1270.40px;top:187.78px;font-size:11.2px;line-height:11.2px;color:#222;font-weight:bold;">OncoTree4</div>
<svg class="b" style="left:1345.90px;top:187.20px;" width="10" height="11" viewBox="0 0 10 11"><g fill="none" stroke-width="1.4"><g stroke="#dcdcdc"><line x1="2.5" y1="1" x2="2.5" y2="9.5"/><polyline points="0.5,7.4 2.5,9.8 4.5,7.4"/></g><g stroke="#cfcfcf"><line x1="7.5" y1="1.2" x2="7.5" y2="10.5"/><polyline points="5.5,3.4 7.5,1 9.5,3.4"/></g></g></svg>
<div class="b" style="left:1271.00px;top:213.30px;width:85.40px;height:20.00px;background:#eee;border:1px solid #d9d9d9;border-right:none;border-radius:3px 0 0 3px;box-sizing:border-box;"></div>
<div class="t " style="left:1279.80px;top:218.33px;font-size:10.2px;line-height:10.2px;color:#aaa;font-weight:normal;">All</div>
<div class="t " style="left:1367.50px;top:187.78px;font-size:11.2px;line-height:11.2px;color:#222;font-weight:bold;">TNBC</div>
<svg class="b" style="left:1421.10px;top:187.20px;" width="10" height="11" viewBox="0 0 10 11"><g fill="none" stroke-width="1.4"><g stroke="#dcdcdc"><line x1="2.5" y1="1" x2="2.5" y2="9.5"/><polyline points="0.5,7.4 2.5,9.8 4.5,7.4"/></g><g stroke="#cfcfcf"><line x1="7.5" y1="1.2" x2="7.5" y2="10.5"/><polyline points="5.5,3.4 7.5,1 9.5,3.4"/></g></g></svg>
<div class="b" style="left:1367.50px;top:213.30px;width:64.10px;height:20.00px;background:#fff;border:1px solid #d9d9d9;border-right:none;border-radius:3px 0 0 3px;box-sizing:border-box;"></div>
<div class="t " style="left:1376.30px;top:218.33px;font-size:10.2px;line-height:10.2px;color:#aaa;font-weight:normal;">All</div>
<div class="b" style="left:505.00px;top:238.50px;width:932.00px;height:26.90px;background:#f9f9f9;"></div>
<div class="t " style="left:507.20px;top:246.28px;font-size:11.2px;line-height:11.2px;color:#333;font-weight:normal;">LE:CCRF-CEM</div>
<div class="t" style="right:975.10px;top:246.28px;font-size:11.2px;line-height:11.2px;color:#333;font-weight:normal;text-align:right;">1.195</div>
<div class="t" style="right:851.90px;top:246.28px;font-size:11.2px;line-height:11.2px;color:#333;font-weight:normal;text-align:right;">1.133</div>
<div class="t " style="left:859.70px;top:246.28px;font-size:11.2px;line-height:11.2px;color:#333;font-weight:normal;">leukemia</div>
<div class="t " style="left:940.00px;top:246.28px;font-size:11.2px;line-height:11.2px;color:#333;font-weight:normal;">Blood</div>
<div class="t " style="left:1037.30px;top:246.28px;font-size:11.2px;line-height:11.2px;color:#333;font-weight:normal;">Leukemia (LEUK)</div>
<div class="t " style="left:1154.30px;top:246.28px;font-size:11.2px;line-height:11.2px;color:#333;font-weight:normal;">NA</div>
<div class="t " style="left:1270.70px;top:246.28px;font-size:11.2px;line-height:11.2px;color:#333;font-weight:normal;">NA</div>
<div class="t " style="left:1367.20px;top:246.28px;font-size:11.2px;line-height:11.2px;color:#333;font-weight:normal;">NA</div>
<div class="b" style="left:505.00px;top:265.40px;width:932.00px;height:41.70px;background:#fff;"></div>
<div class="b" style="left:505.00px;top:264.90px;width:932.00px;height:1.00px;background:#ddd;"></div>
<div class="t " style="left:507.20px;top:273.18px;font-size:11.2px;line-height:11.2px;color:#333;font-weight:normal;">LE:HL-60(TB)</div>
<div class="t" style="right:975.10px;top:273.18px;font-size:11.2px;line-height:11.2px;color:#333;font-weight:normal;text-align:right;">1.307</div>
<div class="t" style="right:851.90px;top:273.18px;font-size:11.2px;line-height:11.2px;color:#333;font-weight:normal;text-align:right;">0.699</div>
<div class="t " style="left:859.70px;top:273.18px;font-size:11.2px;line-height:11.2px;color:#333;font-weight:normal;">leukemia</div>
<div class="t " style="left:940.00px;top:273.18px;font-size:11.2px;line-height:11.2px;color:#333;font-weight:normal;">Blood</div>
<div class="t " style="left:1037.30px;top:273.18px;font-size:11.2px;line-height:11.2px;color:#333;font-weight:normal;">Leukemia (LEUK)</div>
<div class="t " style="left:1154.30px;top:273.18px;font-size:11.2px;line-height:11.2px;color:#333;font-weight:normal;">Acute Myeloid</div>
<div class="t " style="left:1154.30px;top:288.58px;font-size:11.2px;line-height:11.2px;color:#333;font-weight:normal;">Leukemia (AML)</div>
<div class="t " style="left:1270.70px;top:273.18px;font-size:11.2px;line-height:11.2px;color:#333;font-weight:normal;">NA</div>
<div class="t " style="left:1367.20px;top:273.18px;font-size:11.2px;line-height:11.2px;color:#333;font-weight:normal;">NA</div>
<div class="b" style="left:505.00px;top:307.10px;width:932.00px;height:58.00px;background:#f9f9f9;"></div>
<div class="b" style="left:505.00px;top:306.60px;width:932.00px;height:1.00px;background:#ddd;"></div>
<div class="t " style="left:507.20px;top:314.88px;font-size:11.2px;line-height:11.2px;color:#333;font-weight:normal;">LE:K-562</div>
<div class="t" style="right:975.10px;top:314.88px;font-size:11.2px;line-height:11.2px;color:#333;font-weight:normal;text-align:right;">-0.934</div>
<div class="t" style="right:851.90px;top:314.88px;font-size:11.2px;line-height:11.2px;color:#333;font-weight:normal;text-align:right;">0.065</div>
<div class="t " style="left:859.70px;top:314.88px;font-size:11.2px;line-height:11.2px;color:#333;font-weight:normal;">leukemia</div>
<div class="t " style="left:940.00px;top:314.88px;font-size:11.2px;line-height:11.2px;color:#333;font-weight:normal;">Blood</div>
<div class="t " style="left:1037.30px;top:314.88px;font-size:11.2px;line-height:11.2px;color:#333;font-weight:normal;">Leukemia (LEUK)</div>
<div class="t " style="left:1154.30px;top:314.88px;font-size:11.2px;line-height:11.2px;color:#333;font-weight:normal;">Chronic</div>
<div class="t " style="left:1154.30px;top:330.28px;font-size:11.2px;line-height:11.2px;color:#333;font-weight:normal;">Myelogenous</div>
<div class="t " style="left:1154.30px;top:345.68px;font-size:11.2px;line-height:11.2px;color:#333;font-weight:normal;">Leukemia (CML)</div>
<div class="t " style="left:1270.70px;top:314.88px;font-size:11.2px;line-height:11.2px;color:#333;font-weight:normal;">NA</div>
<div class="t " style="left:1367.20px;top:314.88px;font-size:11.2px;line-height:11.2px;color:#333;font-weight:normal;">NA</div>
<div class="b" style="left:505.00px;top:365.10px;width:932.00px;height:41.30px;background:#fff;"></div>
<div class="b" style="left:505.00px;top:364.60px;width:932.00px;height:1.00px;background:#ddd;"></div>
<div class="t " style="left:507.20px;top:372.88px;font-size:11.2px;line-height:11.2px;color:#333;font-weight:normal;">LE:MOLT-4</div>
<div class="t" style="right:975.10px;top:372.88px;font-size:11.2px;line-height:11.2px;color:#333;font-weight:normal;text-align:right;">1.726</div>
<div class="t" style="right:851.90px;top:372.88px;font-size:11.2px;line-height:11.2px;color:#333;font-weight:normal;text-align:right;">1.107</div>
<div class="t " style="left:859.70px;top:372.88px;font-size:11.2px;line-height:11.2px;color:#333;font-weight:normal;">leukemia</div>
<div class="t " style="left:940.00px;top:372.88px;font-size:11.2px;line-height:11.2px;color:#333;font-weight:normal;">Blood</div>
<div class="t " style="left:1037.30px;top:372.88px;font-size:11.2px;line-height:11.2px;color:#333;font-weight:normal;">Leukemia (LEUK)</div>
<div class="t " style="left:1154.30px;top:372.88px;font-size:11.2px;line-height:11.2px;color:#333;font-weight:normal;">Acute Lymphoid</div>
<div class="t " style="left:1154.30px;top:388.28px;font-size:11.2px;line-height:11.2px;color:#333;font-weight:normal;">Leukemia (ALL)</div>
<div class="t " style="left:1270.70px;top:372.88px;font-size:11.2px;line-height:11.2px;color:#333;font-weight:normal;">NA</div>
<div class="t " style="left:1367.20px;top:372.88px;font-size:11.2px;line-height:11.2px;color:#333;font-weight:normal;">NA</div>
<div class="b" style="left:505.00px;top:406.40px;width:932.00px;height:42.20px;background:#f9f9f9;"></div>
<div class="b" style="left:505.00px;top:405.90px;width:932.00px;height:1.00px;background:#ddd;"></div>
<div class="t " style="left:507.20px;top:414.18px;font-size:11.2px;line-height:11.2px;color:#333;font-weight:normal;">LE:RPMI-8226</div>
<div class="t" style="right:975.10px;top:414.18px;font-size:11.2px;line-height:11.2px;color:#333;font-weight:normal;text-align:right;">-0.94</div>
<div class="t" style="right:851.90px;top:414.18px;font-size:11.2px;line-height:11.2px;color:#333;font-weight:normal;text-align:right;">-0.806</div>
<div class="t " style="left:859.70px;top:414.18px;font-size:11.2px;line-height:11.2px;color:#333;font-weight:normal;">leukemia</div>
<div class="t " style="left:940.00px;top:414.18px;font-size:11.2px;line-height:11.2px;color:#333;font-weight:normal;">Blood</div>
<div class="t " style="left:1037.30px;top:414.18px;font-size:11.2px;line-height:11.2px;color:#333;font-weight:normal;">Multiple Myeloma</div>
<div class="t " style="left:1037.30px;top:429.58px;font-size:11.2px;line-height:11.2px;color:#333;font-weight:normal;">(MM)</div>
<div class="t " style="left:1154.30px;top:414.18px;font-size:11.2px;line-height:11.2px;color:#333;font-weight:normal;">NA</div>
<div class="t " style="left:1270.70px;top:414.18px;font-size:11.2px;line-height:11.2px;color:#333;font-weight:normal;">NA</div>
<div class="t " style="left:1367.20px;top:414.18px;font-size:11.2px;line-height:11.2px;color:#333;font-weight:normal;">NA</div>
<div class="b" style="left:505.00px;top:448.60px;width:932.00px;height:26.10px;background:#fff;"></div>
<div class="b" style="left:505.00px;top:448.10px;width:932.00px;height:1.00px;background:#ddd;"></div>
<div class="t " style="left:507.20px;top:456.38px;font-size:11.2px;line-height:11.2px;color:#333;font-weight:normal;">LE:SR</div>
<div class="t" style="right:975.10px;top:456.38px;font-size:11.2px;line-height:11.2px;color:#333;font-weight:normal;text-align:right;">1.296</div>
<div class="t" style="right:851.90px;top:456.38px;font-size:11.2px;line-height:11.2px;color:#333;font-weight:normal;text-align:right;">0.775</div>
<div class="t " style="left:859.70px;top:456.38px;font-size:11.2px;line-height:11.2px;color:#333;font-weight:normal;">leukemia</div>
<div class="t " style="left:940.00px;top:456.38px;font-size:11.2px;line-height:11.2px;color:#333;font-weight:normal;">Blood</div>
<div class="t " style="left:1037.30px;top:456.38px;font-size:11.2px;line-height:11.2px;color:#333;font-weight:normal;">NA</div>
<div class="t " style="left:1154.30px;top:456.38px;font-size:11.2px;line-height:11.2px;color:#333;font-weight:normal;">NA</div>
<div class="t " style="left:1270.70px;top:456.38px;font-size:11.2px;line-height:11.2px;color:#333;font-weight:normal;">NA</div>
<div class="t " style="left:1367.20px;top:456.38px;font-size:11.2px;line-height:11.2px;color:#333;font-weight:normal;">NA</div>
<div class="b" style="left:505.00px;top:474.70px;width:932.00px;height:58.70px;background:#f9f9f9;"></div>
<div class="b" style="left:505.00px;top:474.20px;width:932.00px;height:1.00px;background:#ddd;"></div>
<div class="t " style="left:507.20px;top:482.48px;font-size:11.2px;line-height:11.2px;color:#333;font-weight:normal;">CO:COLO 205</div>
<div class="t" style="right:975.10px;top:482.48px;font-size:11.2px;line-height:11.2px;color:#333;font-weight:normal;text-align:right;">-0.782</div>
<div class="t" style="right:851.90px;top:482.48px;font-size:11.2px;line-height:11.2px;color:#333;font-weight:normal;text-align:right;">-1.144</div>
<div class="t " style="left:859.70px;top:482.48px;font-size:11.2px;line-height:11.2px;color:#333;font-weight:normal;">colon</div>
<div class="t " style="left:940.00px;top:482.48px;font-size:11.2px;line-height:11.2px;color:#333;font-weight:normal;">Bowel</div>
<div class="t " style="left:1037.30px;top:482.48px;font-size:11.2px;line-height:11.2px;color:#333;font-weight:normal;">Colorectal</div>
<div class="t " style="left:1037.30px;top:497.88px;font-size:11.2px;line-height:11.2px;color:#333;font-weight:normal;">Adenocarcinoma</div>
<div class="t " style="left:1037.30px;top:513.28px;font-size:11.2px;line-height:11.2px;color:#333;font-weight:normal;">(COADREAD)</div>
<div class="t " style="left:1154.30px;top:482.48px;font-size:11.2px;line-height:11.2px;color:#333;font-weight:normal;">NA</div>
<div class="t " style="left:1270.70px;top:482.48px;font-size:11.2px;line-height:11.2px;color:#333;font-weight:normal;">NA</div>
<div class="t " style="left:1367.20px;top:482.48px;font-size:11.2px;line-height:11.2px;color:#333;font-weight:normal;">NA</div>
<div class="b" style="left:505.00px;top:533.40px;width:932.00px;height:26.00px;background:#fff;"></div>
<div class="b" style="left:505.00px;top:532.90px;width:932.00px;height:1.00px;background:#ddd;"></div>
<div class="t " style="left:507.20px;top:541.18px;font-size:11.2px;line-height:11.2px;color:#333;font-weight:normal;">CO:HCC-2998</div>
<div class="t" style="right:975.10px;top:541.18px;font-size:11.2px;line-height:11.2px;color:#333;font-weight:normal;text-align:right;">-0.977</div>
<div class="t" style="right:851.90px;top:541.18px;font-size:11.2px;line-height:11.2px;color:#333;font-weight:normal;text-align:right;">-0.853</div>
<div class="t " style="left:859.70px;top:541.18px;font-size:11.2px;line-height:11.2px;color:#333;font-weight:normal;">colon</div>
<div class="t " style="left:940.00px;top:541.18px;font-size:11.2px;line-height:11.2px;color:#333;font-weight:normal;">Bowel</div>
<div class="t " style="left:1037.30px;top:541.18px;font-size:11.2px;line-height:11.2px;color:#333;font-weight:normal;">NA</div>
<div class="t " style="left:1154.30px;top:541.18px;font-size:11.2px;line-height:11.2px;color:#333;font-weight:normal;">NA</div>
<div class="t " style="left:1270.70px;top:541.18px;font-size:11.2px;line-height:11.2px;color:#333;font-weight:normal;">NA</div>
<div class="t " style="left:1367.20px;top:541.18px;font-size:11.2px;line-height:11.2px;color:#333;font-weight:normal;">NA</div>
<div class="b" style="left:505.00px;top:559.40px;width:932.00px;height:26.70px;background:#f9f9f9;"></div>
<div class="b" style="left:505.00px;top:558.90px;width:932.00px;height:1.00px;background:#ddd;"></div>
<div class="t " style="left:507.20px;top:567.18px;font-size:11.2px;line-height:11.2px;color:#333;font-weight:normal;">CO:HCT-116</div>
<div class="t" style="right:975.10px;top:567.18px;font-size:11.2px;line-height:11.2px;color:#333;font-weight:normal;text-align:right;">-0.944</div>
<div class="t" style="right:851.90px;top:567.18px;font-size:11.2px;line-height:11.2px;color:#333;font-weight:normal;text-align:right;">0.255</div>
<div class="t " style="left:859.70px;top:567.18px;font-size:11.2px;line-height:11.2px;color:#333;font-weight:normal;">colon</div>
<div class="t " style="left:940.00px;top:567.18px;font-size:11.2px;line-height:11.2px;color:#333;font-weight:normal;">Bowel</div>
<div class="t " style="left:1037.30px;top:567.18px;font-size:11.2px;line-height:11.2px;color:#333;font-weight:normal;">NA</div>
<div class="t " style="left:1154.30px;top:567.18px;font-size:11.2px;line-height:11.2px;color:#333;font-weight:normal;">NA</div>
<div class="t " style="left:1270.70px;top:567.18px;font-size:11.2px;line-height:11.2px;color:#333;font-weight:normal;">NA</div>
<div class="t " style="left:1367.20px;top:567.18px;font-size:11.2px;line-height:11.2px;color:#333;font-weight:normal;">NA</div>
<div class="b" style="left:505.00px;top:586.10px;width:932.00px;height:57.20px;background:#fff;"></div>
<div class="b" style="left:505.00px;top:585.60px;width:932.00px;height:1.00px;background:#ddd;"></div>
<div class="t " style="left:507.20px;top:593.88px;font-size:11.2px;line-height:11.2px;color:#333;font-weight:normal;">CO:HCT-15</div>
<div class="t" style="right:975.10px;top:593.88px;font-size:11.2px;line-height:11.2px;color:#333;font-weight:normal;text-align:right;">-0.966</div>
<div class="t" style="right:851.90px;top:593.88px;font-size:11.2px;line-height:11.2px;color:#333;font-weight:normal;text-align:right;">-1.003</div>
<div class="t " style="left:859.70px;top:593.88px;font-size:11.2px;line-height:11.2px;color:#333;font-weight:normal;">colon</div>
<div class="t " style="left:940.00px;top:593.88px;font-size:11.2px;line-height:11.2px;color:#333;font-weight:normal;">Bowel</div>
<div class="t " style="left:1037.30px;top:593.88px;font-size:11.2px;line-height:11.2px;color:#333;font-weight:normal;">Colorectal</div>
<div class="t " style="left:1037.30px;top:609.28px;font-size:11.2px;line-height:11.2px;color:#333;font-weight:normal;">Adenocarcinoma</div>
<div class="t " style="left:1037.30px;top:624.68px;font-size:11.2px;line-height:11.2px;color:#333;font-weight:normal;">(COADREAD)</div>
<div class="t " style="left:1154.30px;top:593.88px;font-size:11.2px;line-height:11.2px;color:#333;font-weight:normal;">NA</div>
<div class="t " style="left:1270.70px;top:593.88px;font-size:11.2px;line-height:11.2px;color:#333;font-weight:normal;">NA</div>
<div class="t " style="left:1367.20px;top:593.88px;font-size:11.2px;line-height:11.2px;color:#333;font-weight:normal;">NA</div>
<div class="b" style="left:505.00px;top:643.30px;width:932.00px;height:57.10px;background:#f9f9f9;"></div>
<div class="b" style="left:505.00px;top:642.80px;width:932.00px;height:1.00px;background:#ddd;"></div>
<div class="t " style="left:507.20px;top:651.08px;font-size:11.2px;line-height:11.2px;color:#333;font-weight:normal;">CO:HT29</div>
<div class="t" style="right:975.10px;top:651.08px;font-size:11.2px;line-height:11.2px;color:#333;font-weight:normal;text-align:right;">-0.934</div>
<div class="t" style="right:851.90px;top:651.08px;font-size:11.2px;line-height:11.2px;color:#333;font-weight:normal;text-align:right;">-0.386</div>
<div class="t " style="left:859.70px;top:651.08px;font-size:11.2px;line-height:11.2px;color:#333;font-weight:normal;">colon</div>
<div class="t " style="left:940.00px;top:651.08px;font-size:11.2px;line-height:11.2px;color:#333;font-weight:normal;">Bowel</div>
<div class="t " style="left:1037.30px;top:651.08px;font-size:11.2px;line-height:11.2px;color:#333;font-weight:normal;">Colorectal</div>
<div class="t " style="left:1037.30px;top:666.48px;font-size:11.2px;line-height:11.2px;color:#333;font-weight:normal;">Adenocarcinoma</div>
<div class="t " style="left:1037.30px;top:681.88px;font-size:11.2px;line-height:11.2px;color:#333;font-weight:normal;">(COADREAD)</div>
<div class="t " style="left:1154.30px;top:651.08px;font-size:11.2px;line-height:11.2px;color:#333;font-weight:normal;">NA</div>
<div class="t " style="left:1270.70px;top:651.08px;font-size:11.2px;line-height:11.2px;color:#333;font-weight:normal;">NA</div>
<div class="t " style="left:1367.20px;top:651.08px;font-size:11.2px;line-height:11.2px;color:#333;font-weight:normal;">NA</div>
<div class="b" style="left:505.00px;top:700.40px;width:932.00px;height:57.90px;background:#fff;"></div>
<div class="b" style="left:505.00px;top:699.90px;width:932.00px;height:1.00px;background:#ddd;"></div>
<div class="t " style="left:507.20px;top:708.18px;font-size:11.2px;line-height:11.2px;color:#333;font-weight:normal;">CO:KM12</div>
<div class="t" style="right:975.10px;top:708.18px;font-size:11.2px;line-height:11.2px;color:#333;font-weight:normal;text-align:right;">-0.88</div>
<div class="t" style="right:851.90px;top:708.18px;font-size:11.2px;line-height:11.2px;color:#333;font-weight:normal;text-align:right;">-1.032</div>
<div class="t " style="left:859.70px;top:708.18px;font-size:11.2px;line-height:11.2px;color:#333;font-weight:normal;">colon</div>
<div class="t " style="left:940.00px;top:708.18px;font-size:11.2px;line-height:11.2px;color:#333;font-weight:normal;">Bowel</div>
<div class="t " style="left:1037.30px;top:708.18px;font-size:11.2px;line-height:11.2px;color:#333;font-weight:normal;">Colorectal</div>
<div class="t " style="left:1037.30px;top:723.58px;font-size:11.2px;line-height:11.2px;color:#333;font-weight:normal;">Adenocarcinoma</div>
<div class="t " style="left:1037.30px;top:738.98px;font-size:11.2px;line-height:11.2px;color:#333;font-weight:normal;">(COADREAD)</div>
<div class="t " style="left:1154.30px;top:708.18px;font-size:11.2px;line-height:11.2px;color:#333;font-weight:normal;">NA</div>
<div class="t " style="left:1270.70px;top:708.18px;font-size:11.2px;line-height:11.2px;color:#333;font-weight:normal;">NA</div>
<div class="t " style="left:1367.20px;top:708.18px;font-size:11.2px;line-height:11.2px;color:#333;font-weight:normal;">NA</div>
<div class="b" style="left:505.00px;top:758.30px;width:932.00px;height:58.00px;background:#f9f9f9;"></div>
<div class="b" style="left:505.00px;top:757.80px;width:932.00px;height:1.00px;background:#ddd;"></div>
<div class="t " style="left:507.20px;top:766.08px;font-size:11.2px;line-height:11.2px;color:#333;font-weight:normal;">CO:SW-620</div>
<div class="t" style="right:975.10px;top:766.08px;font-size:11.2px;line-height:11.2px;color:#333;font-weight:normal;text-align:right;">-1.029</div>
<div class="t" style="right:851.90px;top:766.08px;font-size:11.2px;line-height:11.2px;color:#333;font-weight:normal;text-align:right;">0.238</div>
<div class="t " style="left:859.70px;top:766.08px;font-size:11.2px;line-height:11.2px;color:#333;font-weight:normal;">colon</div>
<div class="t " style="left:940.00px;top:766.08px;font-size:11.2px;line-height:11.2px;color:#333;font-weight:normal;">Bowel</div>
<div class="t " style="left:1037.30px;top:766.08px;font-size:11.2px;line-height:11.2px;color:#333;font-weight:normal;">Colorectal</div>
<div class="t " style="left:1037.30px;top:781.48px;font-size:11.2px;line-height:11.2px;color:#333;font-weight:normal;">Adenocarcinoma</div>
<div class="t " style="left:1037.30px;top:796.88px;font-size:11.2px;line-height:11.2px;color:#333;font-weight:normal;">(COADREAD)</div>
<div class="t " style="left:1154.30px;top:766.08px;font-size:11.2px;line-height:11.2px;color:#333;font-weight:normal;">NA</div>
<div class="t " style="left:1270.70px;top:766.08px;font-size:11.2px;line-height:11.2px;color:#333;font-weight:normal;">NA</div>
<div class="t " style="left:1367.20px;top:766.08px;font-size:11.2px;line-height:11.2px;color:#333;font-weight:normal;">NA</div>
<div class="b" style="left:505.00px;top:816.30px;width:932.00px;height:57.00px;background:#fff;"></div>
<div class="b" style="left:505.00px;top:815.80px;width:932.00px;height:1.00px;background:#ddd;"></div>
<div class="t " style="left:507.20px;top:824.08px;font-size:11.2px;line-height:11.2px;color:#333;font-weight:normal;">CNS:SF-268</div>
<div class="t" style="right:975.10px;top:824.08px;font-size:11.2px;line-height:11.2px;color:#333;font-weight:normal;text-align:right;">1.863</div>
<div class="t" style="right:851.90px;top:824.08px;font-size:11.2px;line-height:11.2px;color:#333;font-weight:normal;text-align:right;">0.958</div>
<div class="t " style="left:859.70px;top:824.08px;font-size:11.2px;line-height:11.2px;color:#333;font-weight:normal;">central</div>
<div class="t " style="left:859.70px;top:839.48px;font-size:11.2px;line-height:11.2px;color:#333;font-weight:normal;">nervous</div>
<div class="t " style="left:859.70px;top:854.88px;font-size:11.2px;line-height:11.2px;color:#333;font-weight:normal;">system</div>
<div class="t " style="left:940.00px;top:824.08px;font-size:11.2px;line-height:11.2px;color:#333;font-weight:normal;">Brain_CNS</div>
<div class="t " style="left:1037.30px;top:824.08px;font-size:11.2px;line-height:11.2px;color:#333;font-weight:normal;">NA</div>
<div class="t " style="left:1154.30px;top:824.08px;font-size:11.2px;line-height:11.2px;color:#333;font-weight:normal;">NA</div>
<div class="t " style="left:1270.70px;top:824.08px;font-size:11.2px;line-height:11.2px;color:#333;font-weight:normal;">NA</div>
<div class="t " style="left:1367.20px;top:824.08px;font-size:11.2px;line-height:11.2px;color:#333;font-weight:normal;">NA</div>
<div class="b" style="left:505.00px;top:873.30px;width:932.00px;height:57.70px;background:#f9f9f9;"></div>
<div class="b" style="left:505.00px;top:872.80px;width:932.00px;height:1.00px;background:#ddd;"></div>
<div class="t " style="left:507.20px;top:881.08px;font-size:11.2px;line-height:11.2px;color:#333;font-weight:normal;">CNS:SF-295</div>
<div class="t" style="right:975.10px;top:881.08px;font-size:11.2px;line-height:11.2px;color:#333;font-weight:normal;text-align:right;">1.28</div>
<div class="t" style="right:851.90px;top:881.08px;font-size:11.2px;line-height:11.2px;color:#333;font-weight:normal;text-align:right;">0.726</div>
<div class="t " style="left:859.70px;top:881.08px;font-size:11.2px;line-height:11.2px;color:#333;font-weight:normal;">central</div>
<div class="t " style="left:859.70px;top:896.48px;font-size:11.2px;line-height:11.2px;color:#333;font-weight:normal;">nervous</div>
<div class="t " style="left:859.70px;top:911.88px;font-size:11.2px;line-height:11.2px;color:#333;font-weight:normal;">system</div>
<div class="t " style="left:940.00px;top:881.08px;font-size:11.2px;line-height:11.2px;color:#333;font-weight:normal;">Brain_CNS</div>
<div class="t " style="left:1037.30px;top:881.08px;font-size:11.2px;line-height:11.2px;color:#333;font-weight:normal;">Diffuse Glioma</div>
<div class="t " style="left:1037.30px;top:896.48px;font-size:11.2px;line-height:11.2px;color:#333;font-weight:normal;">(DIFG)</div>
<div class="t " style="left:1154.30px;top:881.08px;font-size:11.2px;line-height:11.2px;color:#333;font-weight:normal;">Astrocytoma (ASTR)</div>
<div class="t " style="left:1270.70px;top:881.08px;font-size:11.2px;line-height:11.2px;color:#333;font-weight:normal;">NA</div>
<div class="t " style="left:1367.20px;top:881.08px;font-size:11.2px;line-height:11.2px;color:#333;font-weight:normal;">NA</div>
<div class="b" style="left:501.20px;top:177.20px;width:962.60px;height:756.00px;border:4px solid #0f6cbd;box-sizing:border-box;"></div>
<svg class="b" style="left:808.00px;top:134.00px;" width="44" height="13" viewBox="0 0 44 13"><line x1="8" y1="6.5" x2="42" y2="6.5" stroke="#4472c4" stroke-width="1.3"/><polygon points="1.5,6.5 11.5,1.5 11.5,11.5" fill="#4472c4"/></svg>
<div class="t " style="left:862.00px;top:127.88px;font-size:22.5px;line-height:22.5px;color:#0b69b5;font-weight:normal;letter-spacing:0.3px;-webkit-text-stroke:0.35px #0b69b5;">Download table</div>
<div class="t " style="left:1181.00px;top:94.62px;font-size:27.5px;line-height:27.5px;color:#0b69b5;font-weight:bold;letter-spacing:0.25px;">plot data points table</div>
<svg class="b" style="left:1365.00px;top:129.00px;" width="16" height="54" viewBox="0 0 16 54"><line x1="8.1" y1="0.2" x2="8.1" y2="44" stroke="#4472c4" stroke-width="4"/><polygon points="2.5,41.8 13.8,41.8 8.1,52.6" fill="#4472c4"/></svg>
<div class="b" style="left:505.00px;top:929.20px;width:955.00px;height:0.30px;background:transparent;"></div>
</div>
</body></html>
